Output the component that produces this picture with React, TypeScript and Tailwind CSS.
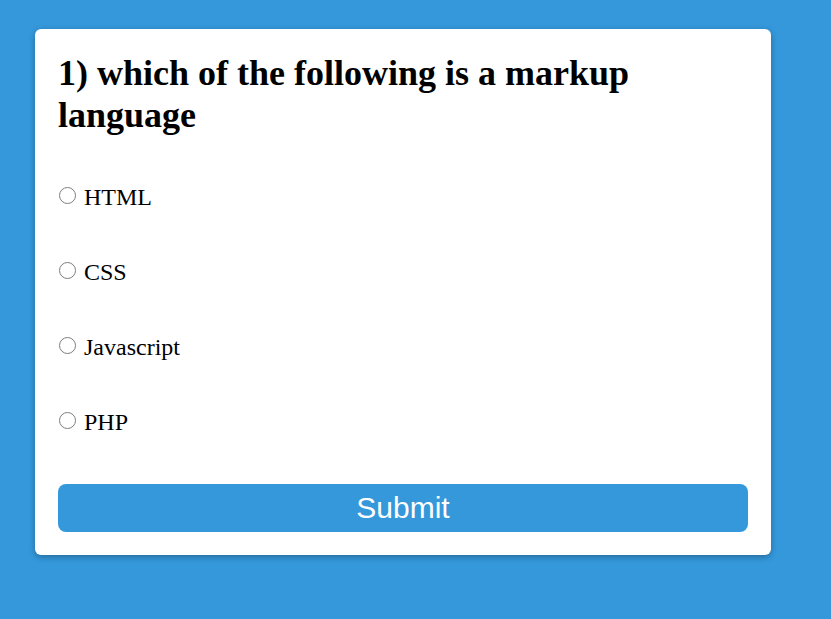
import React, {useState} from "react";

const options = ["HTML", "CSS", "Javascript", "PHP"];

export default function App() {
    const [picked, setPicked] = useState<string | null>(null)

    return <div className="min-h-[619px] w-full bg-[#3498db] pt-[29px] pl-[35px]">
        <div className="w-[736px] bg-white rounded-[6px] shadow-[0_2px_6px_rgba(0,0,0,0.3)] pt-[24px] pb-[23px] px-[23px] flex flex-col">
            <h2 className="font-['Liberation_Serif',serif] font-bold text-[36px] leading-[41.6px] text-black">
                1) which of the following is a markup language
            </h2>
            <ul className="mt-[48px] flex flex-col gap-[47.4px]">
                {options.map((opt) => (
                    <li key={opt} className="flex items-start h-[27.6px]">
                        <input
                            type="radio"
                            name="answer"
                            id={opt}
                            checked={picked === opt}
                            onChange={() => setPicked(opt)}
                            className="appearance-none shrink-0 w-[17px] h-[17px] m-0 mt-[3px] ml-[0.5px] rounded-full border-[1.5px] border-[#7d7d7d] bg-white checked:border-[5px] checked:border-[#0075ff]"
                        />
                        <label
                            htmlFor={opt}
                            className="ml-[8.5px] font-['Liberation_Serif',serif] text-[24px] leading-[27.6px] text-black"
                        >{opt}</label>
                    </li>
                ))}
            </ul>
            <button className="mt-[47.4px] w-full h-[48px] rounded-[8px] bg-[#3498db] text-white font-['Liberation_Sans',Arial,sans-serif] text-[30px] leading-none flex items-center justify-center">
                Submit
            </button>
        </div>
    </div>
}
